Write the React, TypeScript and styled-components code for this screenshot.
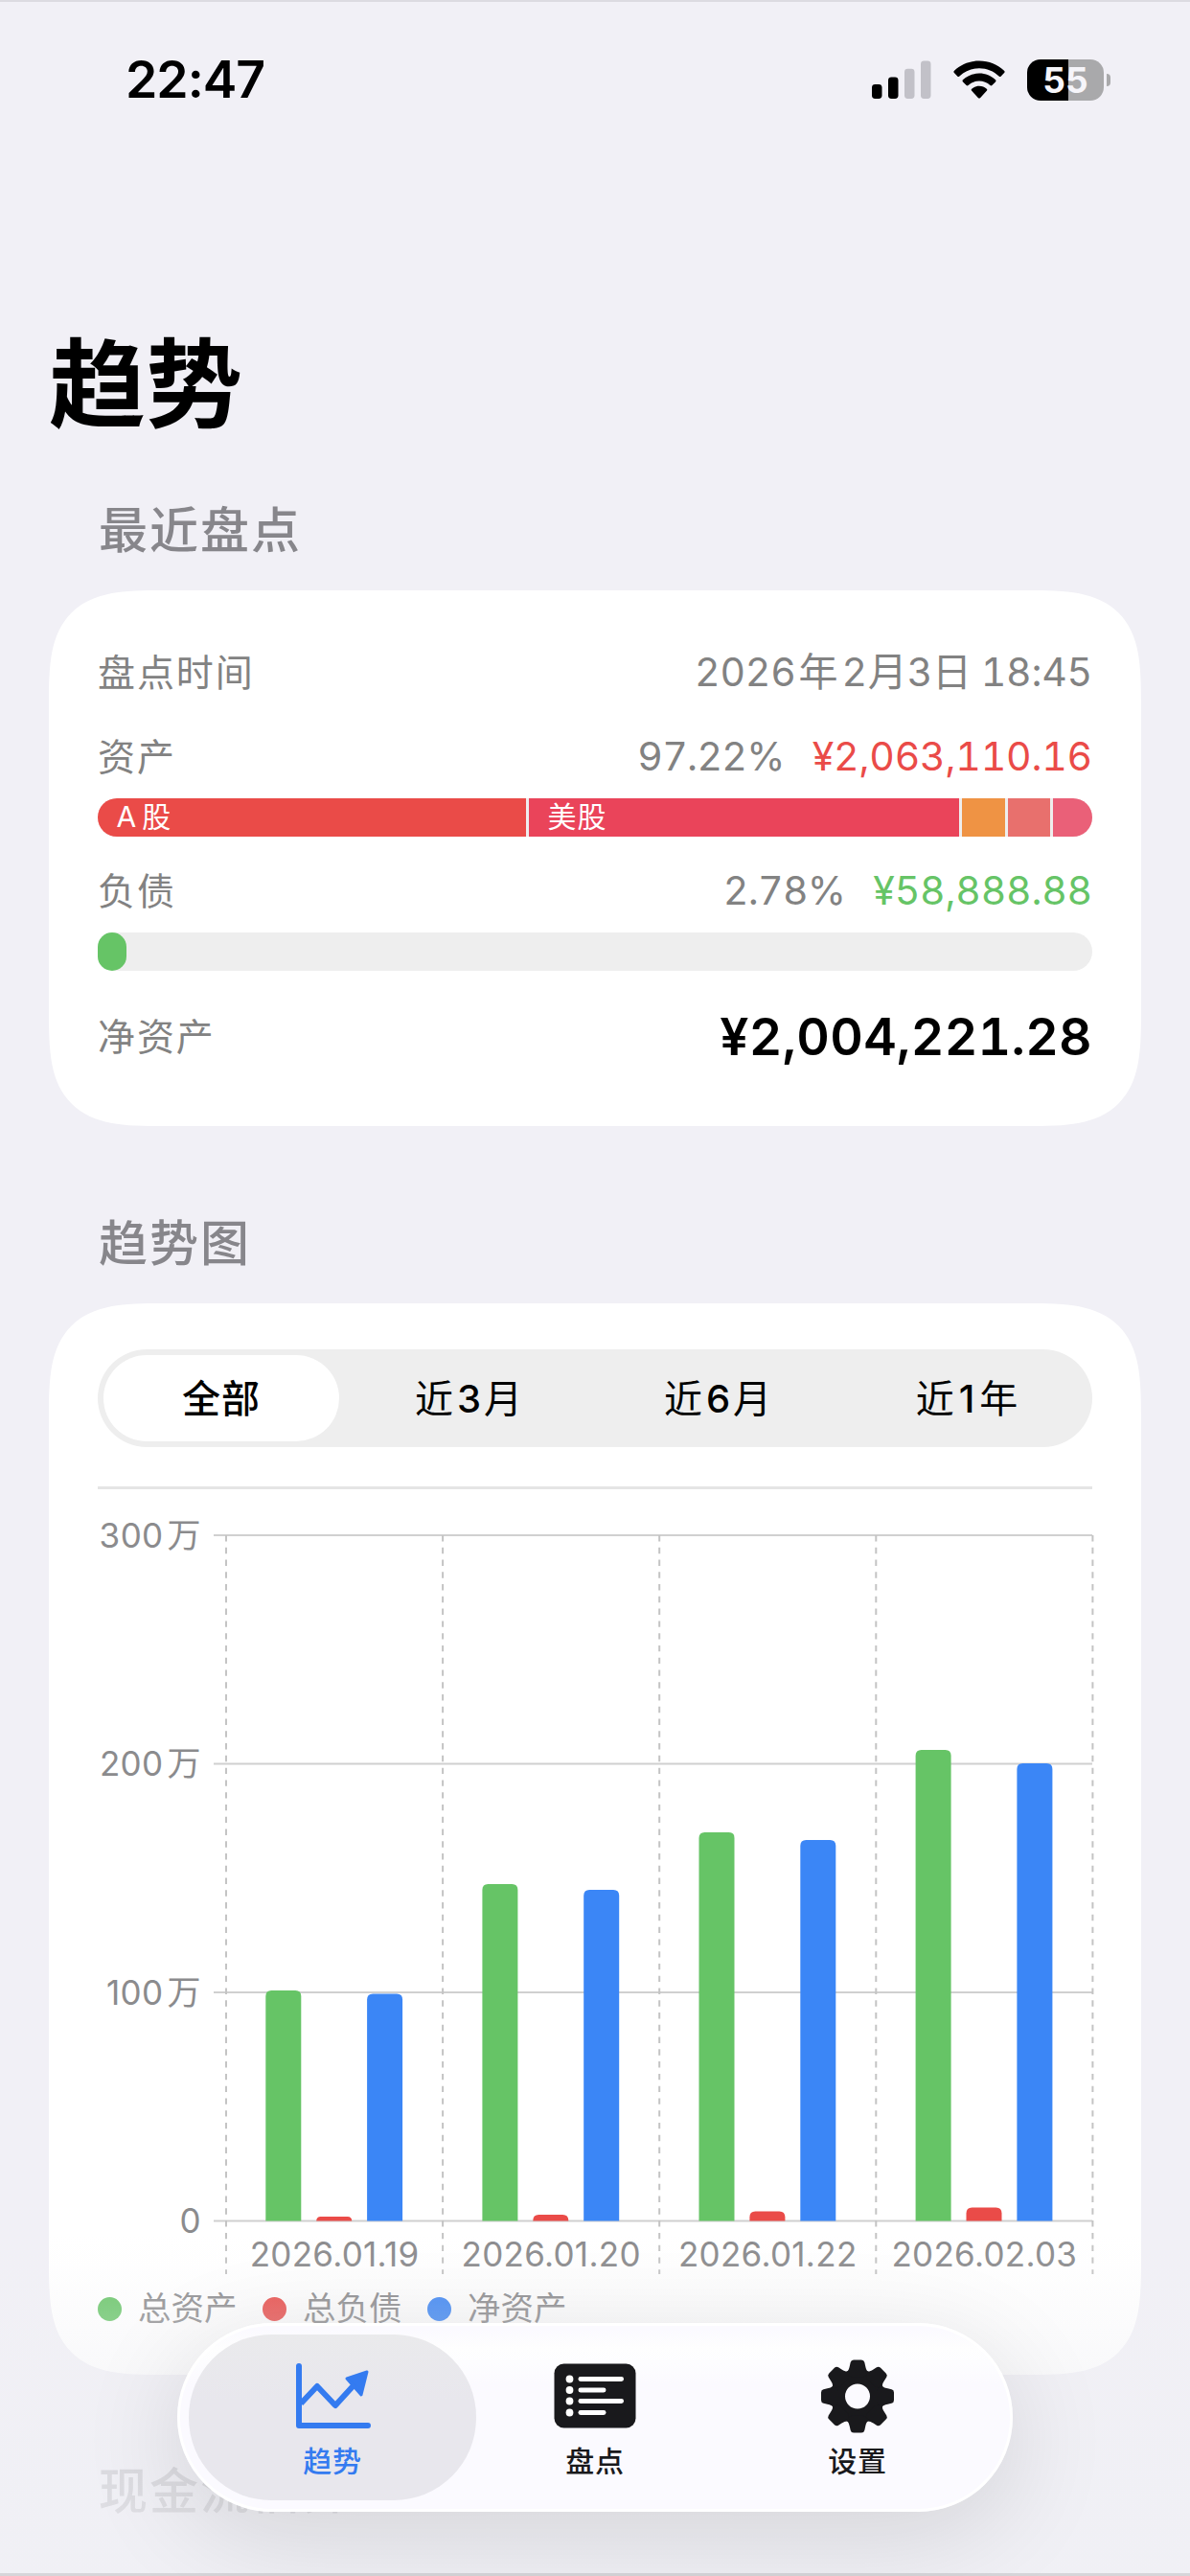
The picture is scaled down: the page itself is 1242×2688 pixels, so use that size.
import React from "react";
import styled, { createGlobalStyle, css } from "styled-components";

const FONT = `"Inter", "Noto Sans CJK SC", sans-serif`;
const BG = "#f1f0f6";
const GREEN = "#66c466";
const RED = "#ea4b48";
const BLUE = "#3b86f6";

const GlobalStyle = createGlobalStyle`
  *, *::before, *::after { box-sizing: border-box; }
  html, body { margin: 0; padding: 0; background: ${BG}; }
  body { font-family: ${FONT}; color: #000; }
  button { font: inherit; color: inherit; border: 0; background: none; padding: 0; margin: 0; }
`;

const Screen = styled.div`
  position: relative;
  width: 1242px;
  height: 2688px;
  overflow: hidden;
  background: ${BG};
  border-top: 2px solid #dcdbe1;
`;

const StatusBar = styled.header`
  display: flex;
  justify-content: space-between;
  align-items: center;
  height: 162px;
  padding: 0 83px 0 131px;
`;

const Clock = styled.div`
  font-size: 53.5px;
  font-weight: 600;
  letter-spacing: -1px;
  line-height: 64px;
`;

const StatusIcons = styled.div`
  display: flex;
  align-items: center;
  gap: 23px;
`;

const Battery = styled.div`
  display: flex;
  align-items: center;
  gap: 3px;
`;

const BatteryBody = styled.div`
  width: 80px;
  height: 43px;
  padding-left: 1px;
  border-radius: 14px;
  background: linear-gradient(90deg, #000 0 43.5px, #a9a9ab 43.5px);
  color: #f6f5fa;
  font-size: 37px;
  font-weight: 700;
  line-height: 43px;
  letter-spacing: 0.2px;
  text-align: center;
`;

const BatteryCap = styled.div`
  width: 4.5px;
  height: 13px;
  border-radius: 0 5px 5px 0;
  background: #a9a9ab;
`;

const Title = styled.h1`
  margin: 162px 0 0 51px;
  height: 150px;
  font-size: 101px;
  font-weight: 700;
  line-height: 150px;
`;

const SectionTitle = styled.h2<{ $top: number }>`
  margin: ${(p) => p.$top}px 0 0 103px;
  height: 64px;
  font-size: 51px;
  font-weight: 500;
  line-height: 64px;
  letter-spacing: 2px;
  color: #87868b;
`;

const Card = styled.section<{ $h: number; $pad: number }>`
  margin: 30px 51px 0;
  height: ${(p) => p.$h}px;
  padding: ${(p) => p.$pad}px 51px 0;
  background: #fff;
  border-radius: 84px;
  @supports (corner-shape: squircle) {
    border-radius: 119px;
    corner-shape: superellipse(1.65);
  }
`;

const Row = styled.div<{ $top?: number; $h?: number }>`
  display: flex;
  justify-content: space-between;
  align-items: center;
  height: ${(p) => p.$h ?? 51}px;
  margin-top: ${(p) => p.$top ?? 0}px;
  line-height: ${(p) => p.$h ?? 51}px;
  font-size: 40px;
  color: #828282;
`;

const Label = styled.span`
  font-size: 39px;
  letter-spacing: 1.9px;
`;

const Figures = styled.div`
  display: flex;
  gap: 29px;
`;

const Figure = styled.span<{ $color?: string; $tight?: boolean }>`
  font-size: 41px;
  letter-spacing: ${(p) => (p.$tight ? -0.7 : -0.2)}px;
  font-feature-settings: "tnum";
  white-space: pre;
  color: ${(p) => p.$color ?? "#828282"};
`;

/* Breathing room where Han characters meet Latin digits or letters */
const Gap = styled.span<{ $l?: number; $r?: number }>`
  margin-left: ${(p) => p.$l ?? 0}px;
  margin-right: ${(p) => p.$r ?? 0}px;
`;

const Digit = styled(Gap)`
  font-weight: 500;
`;

const Total = styled.span`
  font-size: 53.5px;
  font-weight: 600;
  letter-spacing: 0.3px;
  font-feature-settings: "tnum";
  color: #000;
`;

const Track = styled.div<{ $top: number; $clip?: boolean }>`
  display: flex;
  gap: 3px;
  height: 40px;
  margin-top: ${(p) => p.$top}px;
  border-radius: 20px;
  overflow: ${(p) => (p.$clip ? "hidden" : "visible")};
  background: #eeeeee;
`;

const Slice = styled.div<{ $w: number; $color: string }>`
  flex: 0 0 ${(p) => p.$w}px;
  padding-left: 19.5px;
  line-height: 39px;
  font-size: 30px;
  letter-spacing: 1px;
  white-space: nowrap;
  color: #fff;
  background: ${(p) => p.$color};
`;

const DebtFill = styled.div`
  width: 30px;
  height: 40px;
  border-radius: 15px;
  background: ${GREEN};
`;

const Segmented = styled.div`
  display: flex;
  height: 102px;
  padding: 6px;
  border-radius: 51px;
  background: #eeeeee;
`;

const Segment = styled.button<{ $active?: boolean }>`
  flex: ${(p) => (p.$active ? "0 0 246px" : "1 0 0")};
  padding-left: ${(p) => (p.$active ? 0 : 11)}px;
  border-radius: 45px;
  font-size: 40px;
  letter-spacing: 1px;
  line-height: 92px;
  text-align: center;
  ${(p) =>
    p.$active
      ? css`
          background: #fff;
          font-weight: 500;
        `
      : css`
          font-weight: 400;
        `}
`;

const Divider = styled.hr`
  height: 3px;
  margin: 41px 0 0;
  border: 0;
  background: #e5e5e5;
`;

const ChartSvg = styled.svg`
  display: block;
  margin-top: 26px;
  overflow: visible;
  font-family: ${FONT};
  font-size: 35px;
  fill: #8b8b8d;
`;

const Legend = styled.div`
  display: flex;
  gap: 26.5px;
  margin-top: 11px;
`;

const LegendItem = styled.div`
  display: flex;
  align-items: center;
  gap: 17px;
  height: 40px;
  font-size: 34.5px;
  line-height: 40px;
  color: #8b8b8d;
`;

const Dot = styled.span<{ $color: string }>`
  width: 25px;
  height: 25px;
  border-radius: 50%;
  background: ${(p) => p.$color};
`;

const Fade = styled.div`
  position: absolute;
  left: 0;
  right: 0;
  bottom: 0;
  height: 428px;
  border-bottom: 3px solid #d6d5d9;
  background: linear-gradient(
    rgba(241, 241, 245, 0) 70px,
    rgba(241, 241, 245, 0.06) 100px,
    rgba(241, 241, 244, 0.22) 150px,
    rgba(240, 240, 244, 0.42) 216px,
    rgba(240, 240, 245, 0.8) 320px,
    rgba(240, 240, 245, 0.88) 428px
  );
`;

const TabBar = styled.nav`
  position: absolute;
  left: 185px;
  top: 2422px;
  width: 872px;
  height: 197px;
  display: flex;
  padding: 9px;
  border: 3px solid #fff;
  border-radius: 99px;
  background: linear-gradient(#fbfaff 4px, #fefefe 24px, #fdfdff 38px, #fbfaff 60px);
  box-shadow: 0 24px 110px rgba(0, 0, 0, 0.12);
`;

const Tab = styled.button<{ $active?: boolean }>`
  flex: 0 0 300px;
  display: flex;
  flex-direction: column;
  align-items: center;
  padding-top: 23.5px;
  gap: 8.5px;
  border-radius: 86px;
  font-size: 30px;
  font-weight: 500;
  line-height: 40px;
  letter-spacing: 0.8px;
  color: ${(p) => (p.$active ? "#347bf0" : "#19191c")};
  background: ${(p) => (p.$active ? "linear-gradient(#eaeaec, #e8e7ed 40%)" : "transparent")};
  & + & {
    margin-left: -26px;
  }
`;

const SignalIcon = () => (
  <svg width="62" height="40" viewBox="0 0 62 40">
    <rect x="0" y="25" width="10.5" height="15" rx="3.4" />
    <rect x="17" y="17.5" width="10.5" height="22.5" rx="3.4" />
    <rect x="34" y="8.7" width="10.5" height="31.3" rx="3.4" fill="#c2c1c8" />
    <rect x="51" y="0.5" width="10.5" height="39.5" rx="3.4" fill="#c2c1c8" />
  </svg>
);

const WifiIcon = () => (
  <svg width="54" height="40" viewBox="0 0 54 40">
    <path d="M27 .5C37.2.5 46.4 4.400 53 10.800c.8.8.8 1.500.1 2.200l-3.300 3.400c-.7.700-1.500.700-2.200 0C42.100 11.300 35 8.200 27 8.200S11.900 11.300 6.400 16.400c-.7.700-1.500.700-2.200 0L.9 13c-.7-.7-.7-1.400.1-2.200C7.600 4.400 16.800.5 27 .5Z" />
    <path d="M27 13.600c6.500 0 12.500 2.500 17 6.700.7.700.7 1.400 0 2.100l-3.600 3.600c-.6.600-1.300.600-2 0-3-2.800-7-4.500-11.400-4.500s-8.400 1.700-11.400 4.500c-.7.600-1.400.600-2 0L10 22.400c-.7-.7-.7-1.400 0-2.100 4.500-4.200 10.500-6.700 17-6.700Z" />
    <path d="M27 26.800c3 0 5.700 1.100 7.800 3 .7.700.7 1.300 0 2L28.200 38.900c-.8.800-1.600.8-2.400 0L19.200 31.800c-.7-.7-.7-1.300 0-2 2.100-1.900 4.800-3 7.800-3Z" />
  </svg>
);

const TrendIcon = () => (
  <svg width="80" height="80" viewBox="-1 0 80 80" fill="none" stroke="currentColor" strokeWidth="6" strokeLinecap="round" strokeLinejoin="round">
    <path d="M4 9V71H76" />
    <path d="M6 48 23 30 42 50 63 27" strokeLinecap="butt" />
    <path d="M75 15 54 22 69 39Z" fill="currentColor" strokeWidth="3" />
  </svg>
);

const ListIcon = () => (
  <svg width="86" height="80" viewBox="0 0 86 80">
    <rect x=".5" y="6.500" width="85" height="67" rx="10" fill="#19191c" />
    {[22.5, 34, 45.5, 57.5].map((y, i) => (
      <g key={y} fill="#fff">
        <circle cx="16.500" cy={y} r="3.900" />
        <rect x="25.500" y={y - 2.4} width={i % 2 ? 29 : 47.5} height="4.800" rx="2.400" />
      </g>
    ))}
  </svg>
);

const GearIcon = () => (
  <svg width="80" height="80" viewBox="0 0 80 80" fill="#19191c">
    <g transform="translate(40 40.500)">
      <circle r="20.500" fill="none" stroke="#19191c" strokeWidth="15" />
      {[0, 45, 90, 135, 180, 225, 270, 315].map((a) => (
        <path
          key={a}
          transform={`rotate(${a})`}
          d="M-12.500-24.500C-9.500-26.500-9-28-8.200-31.500L-7.300-35.500Q-6.700-38-4-38H4Q6.700-38 7.300-35.500L8.200-31.500C9-28 9.500-26.500 12.500-24.500L6-20H-6Z"
        />
      ))}
    </g>
  </svg>
);

/* Heights of the bars, in pixels above the zero line */
const PLOT_LEFT = 134;
const COLUMN = 226.1;
const BASE = 737.5;
const TOP = 22;
const groups = [
  { date: "2026.01.19", bars: [240.5, 4.5, 237] },
  { date: "2026.01.20", bars: [351.5, 6.5, 345.5] },
  { date: "2026.01.22", bars: [405.5, 10, 397.5] },
  { date: "2026.02.03", bars: [491.5, 14, 477.5] },
];
const ticks = [
  { value: "300", unit: "万" },
  { value: "200", unit: "万" },
  { value: "100", unit: "万" },
  { value: "0", unit: "" },
];
const barColors = [GREEN, RED, BLUE];

const barPath = (x: number, h: number) => {
  const r = Math.min(6, h);
  const t = BASE - h;
  return `M${x} ${BASE}V${t + r}Q${x} ${t} ${x + r} ${t}H${x + 37 - r}Q${x + 37} ${t} ${x + 37} ${t + r}V${BASE}Z`;
};

const Chart = () => (
  <ChartSvg width="1038" height="798" viewBox="0 0 1038 798">
    {ticks.map((t, i) => {
      const y = TOP + (i * (BASE - TOP)) / 3;
      return (
        <g key={t.value}>
          <path d={`M121 ${y}H1038`} stroke="#d0d0d0" strokeWidth="2" />
          <text x="108" y={y + 12.5} textAnchor="end" letterSpacing="0.4">
            {t.value}
            {t.unit && <tspan dx="4">{t.unit}</tspan>}
          </text>
        </g>
      );
    })}
    {[0, 1, 2, 3, 4].map((i) => (
      <path
        key={i}
        d={`M${PLOT_LEFT + i * COLUMN} ${TOP}V793`}
        stroke="#c4c4c4"
        strokeWidth="2"
        strokeDasharray="6.4 6.370"
      />
    ))}
    {groups.map((g, i) => (
      <g key={g.date}>
        {g.bars.map((h, k) => (
          <path key={k} d={barPath(PLOT_LEFT + i * COLUMN + 41.3 + k * 52.9, h)} fill={barColors[k]} />
        ))}
        <text x={PLOT_LEFT + (i + 0.5) * COLUMN} y="784.500" textAnchor="middle" letterSpacing="0.3">
          {g.date}
        </text>
      </g>
    ))}
  </ChartSvg>
);

export default function App() {
  return (
    <>
      <GlobalStyle />
      <Screen>
        <StatusBar>
          <Clock>22:47</Clock>
          <StatusIcons>
            <SignalIcon />
            <WifiIcon />
            <Battery>
              <BatteryBody>55</BatteryBody>
              <BatteryCap />
            </Battery>
          </StatusIcons>
        </StatusBar>

        <Title>趋势</Title>

        <SectionTitle $top={46}>最近盘点</SectionTitle>
        <Card $h={559} $pad={60}>
          <Row>
            <Label>盘点时间</Label>
            <Figure>
              2026<Gap $l={3} $r={4}>年</Gap>2<Gap $l={1}>月</Gap>3<Gap $r={-1}>日</Gap> 18:45
            </Figure>
          </Row>
          <Row $top={37}>
            <Label>资产</Label>
            <Figures>
              <Figure $tight>97.22%</Figure>
              <Figure $color={RED}>¥2,063,110.16</Figure>
            </Figures>
          </Row>
          <Track $top={18} $clip>
            <Slice $w={447} $color={RED}><Gap $r={5}>A</Gap>股</Slice>
            <Slice $w={448.5} $color="#ea445a">美股</Slice>
            <Slice $w={45} $color="#ef9344" />
            <Slice $w={44.5} $color="#e8706d" />
            <Slice $w={41} $color="#ea6078" />
          </Track>
          <Row $top={31}>
            <Label>负债</Label>
            <Figures>
              <Figure $tight>2.78%</Figure>
              <Figure $color={GREEN}>¥58,888.88</Figure>
            </Figures>
          </Row>
          <Track $top={18}>
            <DebtFill />
          </Track>
          <Row $top={37} $h={64}>
            <Label>净资产</Label>
            <Total>¥2,004,221.28</Total>
          </Row>
        </Card>

        <SectionTitle $top={91}>趋势图</SectionTitle>
        <Card $h={1118} $pad={48}>
          <Segmented>
            <Segment $active>全部</Segment>
            <Segment>近<Digit $l={3} $r={2}>3</Digit>月</Segment>
            <Segment>近<Digit $l={3} $r={2}>6</Digit>月</Segment>
            <Segment>近<Digit $l={4} $r={4}>1</Digit>年</Segment>
          </Segmented>
          <Divider />
          <Chart />
          <Legend>
            <LegendItem><Dot $color={GREEN} />总资产</LegendItem>
            <LegendItem><Dot $color={RED} />总负债</LegendItem>
            <LegendItem><Dot $color={BLUE} />净资产</LegendItem>
          </Legend>
        </Card>

        <SectionTitle $top={90}>现金流估算</SectionTitle>

        <Fade />
        <TabBar>
          <Tab $active>
            <TrendIcon />
            趋势
          </Tab>
          <Tab>
            <ListIcon />
            盘点
          </Tab>
          <Tab>
            <GearIcon />
            设置
          </Tab>
        </TabBar>
      </Screen>
    </>
  );
}
